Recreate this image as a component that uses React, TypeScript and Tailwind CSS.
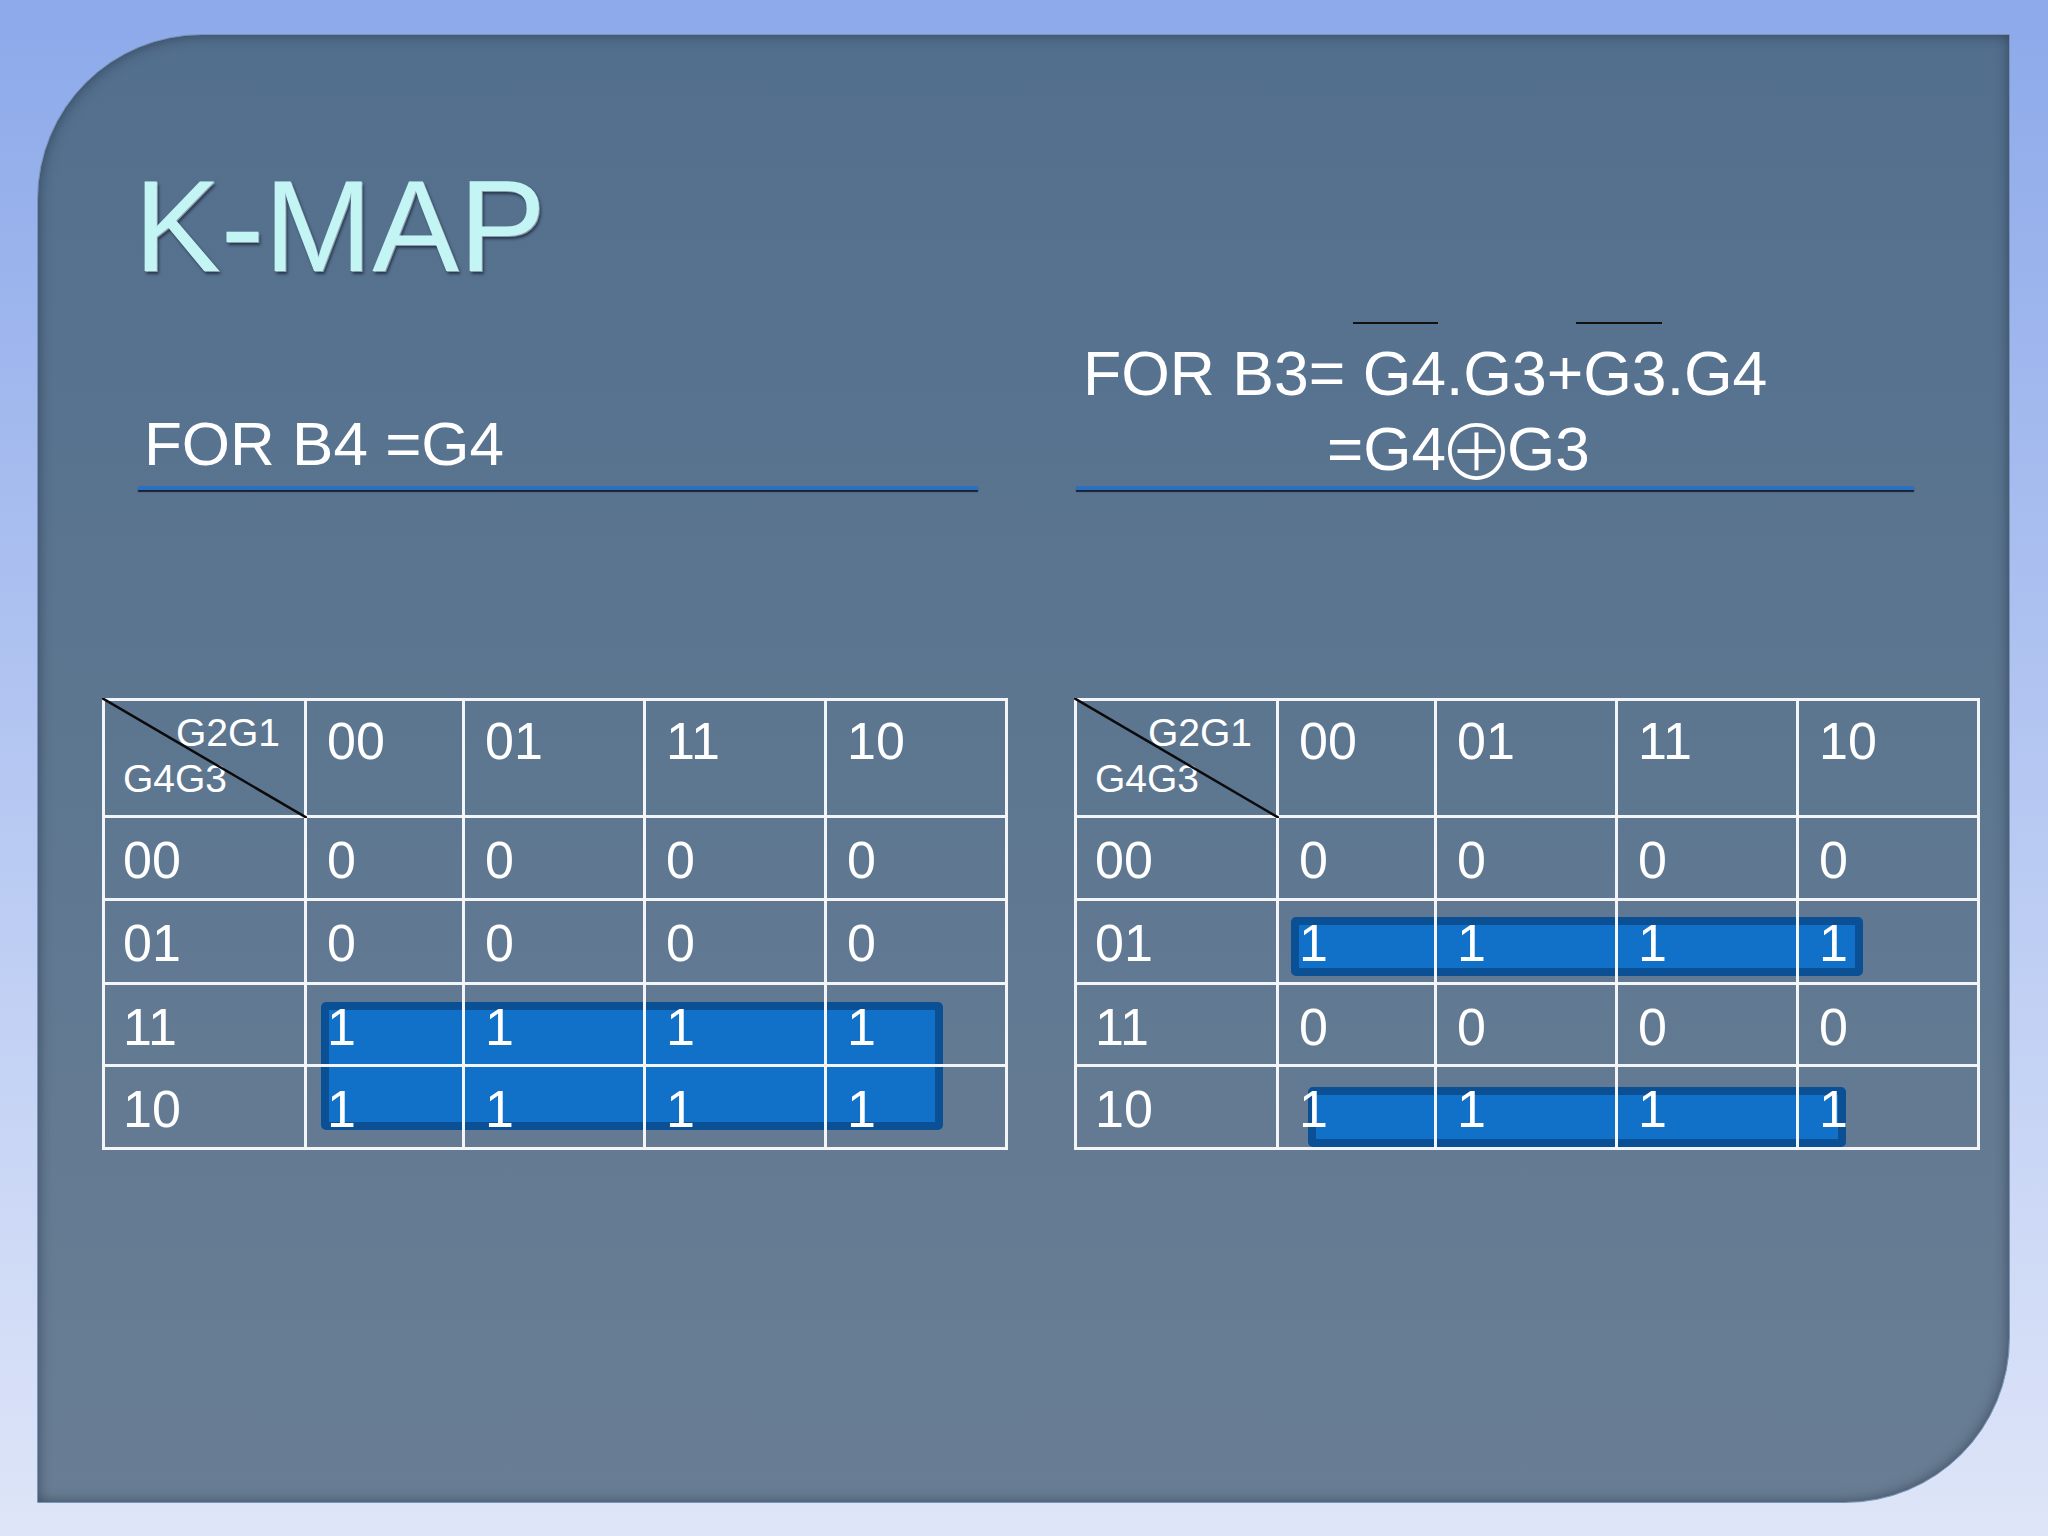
import React from "react";

type Box = { left: number; top: number; width: number; height: number };

const COL_HEADS = ["00", "01", "11", "10"];
const ROW_HEADS = ["00", "01", "11", "10"];

function KMap({ values, boxes }: { values: string[][]; boxes: Box[] }) {
  return (
    <div className="relative w-[906px] h-[452px]">
      {boxes.map((b, i) => (
        <div
          key={i}
          className="absolute rounded-[5px] bg-[#1170c8] border-[8px] border-[#0b4f95]"
          style={{ left: b.left, top: b.top, width: b.width, height: b.height }}
        />
      ))}
      <div className="relative z-10 grid grid-cols-[202px_158px_181px_181px_181px] grid-rows-[117px_83px_84px_82px_83px] border-l-[3px] border-t-[3px] border-[#f3f5f8] text-white">
        <div className="border-r-[3px] border-b-[3px] border-[#f3f5f8] pt-[9px] text-[39px] leading-[46px]">
          <div className="pl-[71px]">G2G1</div>
          <div className="pl-[18px]">G4G3</div>
        </div>
        {COL_HEADS.map((c) => (
          <div key={c} className="border-r-[3px] border-b-[3px] border-[#f3f5f8] pl-[20px] pt-[10px] text-[52px] leading-[60px]">
            {c}
          </div>
        ))}
        {ROW_HEADS.map((r, ri) => (
          <React.Fragment key={r}>
            <div className="border-r-[3px] border-b-[3px] border-[#f3f5f8] pl-[18px] pt-[12px] text-[52px] leading-[60px]">
              {r}
            </div>
            {values[ri].map((v, ci) => (
              <div key={ci} className="border-r-[3px] border-b-[3px] border-[#f3f5f8] pl-[20px] pt-[12px] text-[52px] leading-[60px]">
                {v}
              </div>
            ))}
          </React.Fragment>
        ))}
      </div>
      <svg className="absolute left-0 top-0 z-20 w-[205px] h-[120px]" viewBox="0 0 205 120">
        <line x1="0" y1="0" x2="205" y2="120" stroke="#0b0b0b" strokeWidth="2.5" />
      </svg>
    </div>
  );
}

export default function App() {
  const left = [
    ["0", "0", "0", "0"],
    ["0", "0", "0", "0"],
    ["1", "1", "1", "1"],
    ["1", "1", "1", "1"],
  ];
  const right = [
    ["0", "0", "0", "0"],
    ["1", "1", "1", "1"],
    ["0", "0", "0", "0"],
    ["1", "1", "1", "1"],
  ];
  return (
    <div
      className="w-[2048px] h-[1536px] overflow-hidden bg-gradient-to-b from-[#8da9ea] to-[#dee5f8] pt-[34px] pl-[37px]"
      style={{ fontFamily: '"Liberation Sans", Arial, sans-serif' }}
    >
      <div className="w-[1973px] h-[1469px] rounded-tl-[165px] rounded-br-[165px] bg-gradient-to-b from-[#526f8d] to-[#697e94] border border-[#7a95ba] shadow-[inset_0_0_14px_rgba(25,35,55,0.55)] flex flex-col">
        <div className="mt-[126px] ml-[96px] text-[130px] leading-none text-[#c3f5f5] [text-shadow:1px_1px_0_rgba(235,255,255,0.5),2px_3px_3px_rgba(25,35,55,0.75)]">
          K-MAP
        </div>
        <div className="mt-[45px] flex items-end text-white text-[62px] leading-[75px]">
          <div className="ml-[100px] w-[840px] flex flex-col">
            <div className="pl-[6px] pb-[5px]">FOR B4 =G4</div>
            <div className="h-[4px] bg-[#2c6ec0] shadow-[0_2px_1px_rgba(15,25,40,0.9)]" />
          </div>
          <div className="ml-[98px] w-[838px] flex flex-col">
            <div className="pl-[7px] whitespace-nowrap text-[62.5px]">
              FOR B3={" "}
              <span className="relative">
                <span className="absolute left-[-10px] top-[-16px] w-[85px] h-[2px] bg-[#111]" />
                G4
              </span>
              .G3+
              <span className="relative">
                <span className="absolute left-[-7px] top-[-16px] w-[86px] h-[2px] bg-[#111]" />
                G3
              </span>
              .G4
            </div>
            <div className="pl-[251px] whitespace-nowrap">
              =G4
              <span
                className="relative top-[11px] mx-[-8px] inline-block h-[48px] text-[77px] font-light leading-[48px]"
                style={{ fontFamily: '"Noto Sans CJK JP", "DejaVu Sans", sans-serif' }}
              >
                ⊕
              </span>
              G3
            </div>
            <div className="h-[4px] bg-[#2c6ec0] shadow-[0_2px_1px_rgba(15,25,40,0.9)]" />
          </div>
        </div>
        <div className="mt-[208px] flex">
          <div className="ml-[64px]">
            <KMap values={left} boxes={[{ left: 219, top: 304, width: 622, height: 128 }]} />
          </div>
          <div className="ml-[66px]">
            <KMap
              values={right}
              boxes={[
                { left: 217, top: 219, width: 572, height: 59 },
                { left: 234, top: 389, width: 538, height: 60 },
              ]}
            />
          </div>
        </div>
      </div>
    </div>
  );
}
